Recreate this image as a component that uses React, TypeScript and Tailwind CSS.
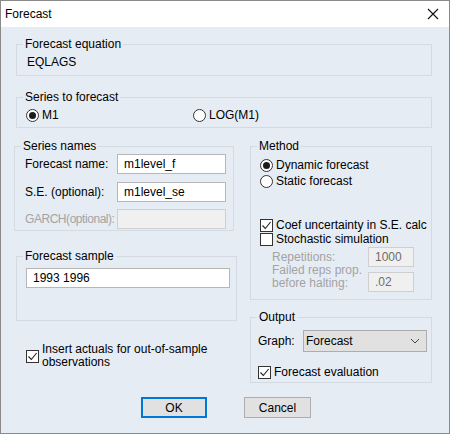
import type { ReactNode } from 'react'

// Classic Win32 "Forecast" dialog rebuilt with flow layout

const FONT = { fontFamily: '"Liberation Sans", Arial, sans-serif' }

function GroupBox({
  title,
  className,
  children,
}: {
  title: string
  className: string
  children: ReactNode
}) {
  return (
    <fieldset className={`border border-[#d3dae2] ${className}`}>
      <legend className="ml-[6px] px-[2px] leading-[14px]">{title}</legend>
      {children}
    </fieldset>
  )
}

function Radio({ checked, label }: { checked?: boolean; label: string }) {
  return (
    <div className="flex h-[14px] items-center">
      <span className="flex h-[13px] w-[13px] items-center justify-center rounded-full border border-[#333] bg-white">
        {checked && <span className="h-[7px] w-[7px] rounded-full bg-[#1b1b1b]" />}
      </span>
      <span className="ml-[3px] leading-[14px]">{label}</span>
    </div>
  )
}

function Check({ checked, label }: { checked?: boolean; label: ReactNode }) {
  return (
    <div className="flex items-center">
      <span className="flex h-[13px] w-[13px] shrink-0 items-center justify-center border border-[#333] bg-white">
        {checked && (
          <svg width="11" height="11" viewBox="0 0 11 11" fill="none">
            <path d="M1.5 5.5L4.3 8.5L9.6 2" stroke="#222" strokeWidth="1.1" />
          </svg>
        )}
      </span>
      <span className="ml-[3px]">{label}</span>
    </div>
  )
}

function TextField({ value, disabled }: { value?: string; disabled?: boolean }) {
  return (
    <div
      className={`flex h-[20px] items-center border px-[6px] ${
        disabled ? 'border-[#cfcfcf] bg-[#f0f0f0] text-[#6d6d6d]' : 'border-[#b7b7b7] bg-white'
      }`}
    >
      {value}
    </div>
  )
}

export default function App() {
  return (
    <div className="h-[435px] w-[452px] bg-white text-[12px] text-black" style={FONT}>
      <div className="flex h-[434px] w-[450px] flex-col border border-[#8a8a8a] bg-[#e6ecf4]">
        {/* title bar */}
        <div className="flex h-[26px] shrink-0 items-center justify-between bg-white pl-[4px] pr-[10px]">
          <span>Forecast</span>
          <svg width="12" height="12" viewBox="0 0 12 12">
            <path d="M1 1L11 11M11 1L1 11" stroke="#111" strokeWidth="1.1" />
          </svg>
        </div>

        <GroupBox title="Forecast equation" className="ml-[15px] mt-[10px] h-[39px] w-[416px]">
          <div className="mt-[4px] pl-[10px] leading-[14px]">EQLAGS</div>
        </GroupBox>

        <GroupBox title="Series to forecast" className="ml-[15px] mt-[14px] h-[38px] w-[416px]">
          <div className="mt-[4px] flex pl-[9px]">
            <div className="w-[167px]">
              <Radio checked label="M1" />
            </div>
            <Radio label="LOG(M1)" />
          </div>
        </GroupBox>

        <div className="mt-[11px] flex items-start">
          {/* left column */}
          <div className="ml-[13px] w-[223px]">
            <GroupBox title="Series names" className="h-[92px] w-[220px]">
              <div className="flex flex-col pl-[10px]">
                <div className="mt-[1px] flex items-center">
                  <span className="w-[92px]">Forecast name:</span>
                  <div className="w-[109px]">
                    <TextField value="m1level_f" />
                  </div>
                </div>
                <div className="mt-[8px] flex items-center">
                  <span className="w-[92px]">S.E. (optional):</span>
                  <div className="w-[109px]">
                    <TextField value="m1level_se" />
                  </div>
                </div>
                <div className="mt-[7px] flex items-center">
                  <span className="w-[92px] whitespace-nowrap tracking-[-0.45px] text-[#a3a3a3]">
                    GARCH(optional):
                  </span>
                  <div className="w-[109px]">
                    <TextField disabled />
                  </div>
                </div>
              </div>
            </GroupBox>

            <GroupBox title="Forecast sample" className="ml-[2px] mt-[18px] h-[72px] w-[221px]">
              <div className="ml-[9px] mt-[5px] w-[204px]">
                <TextField value="1993 1996" />
              </div>
            </GroupBox>

            <div className="ml-[12px] mt-[22px] leading-[13px]">
              <Check
                checked
                label={
                  <>
                    Insert actuals for out-of-sample
                    <br />
                    observations
                  </>
                }
              />
            </div>
          </div>

          {/* right column */}
          <div className="ml-[13px] w-[182px]">
            <GroupBox title="Method" className="h-[161px] w-[182px]">
              <div className="flex flex-col pl-[9px]">
                <div className="mt-[5px]">
                  <Radio checked label="Dynamic forecast" />
                </div>
                <div className="mt-[2px]">
                  <Radio label="Static forecast" />
                </div>
                <div className="mt-[28px] h-[14px]">
                  <Check checked label="Coef uncertainty in S.E. calc" />
                </div>
                <div className="h-[14px]">
                  <Check label="Stochastic simulation" />
                </div>
              </div>
              <div className="mt-[3px] flex pl-[21px]">
                <div className="w-[96px] leading-[13px] text-[#a3a3a3]">
                  <div className="mt-[4px]">Repetitions:</div>
                  <div>Failed reps prop.</div>
                  <div>before halting:</div>
                </div>
                <div className="flex w-[46px] flex-col gap-[5px]">
                  <TextField value="1000" disabled />
                  <TextField value=".02" disabled />
                </div>
              </div>
            </GroupBox>

            <GroupBox title="Output" className="mt-[10px] h-[73px] w-[182px]">
              <div className="mt-[6px] flex items-center pl-[7px]">
                <span className="w-[45px]">Graph:</span>
                <div className="flex h-[22px] w-[124px] items-center justify-between border border-[#adadad] bg-[#e1e1e1] pl-[2px] pr-[6px]">
                  <span>Forecast</span>
                  <svg width="10" height="6" viewBox="0 0 10 6">
                    <path d="M1 1L5 5L9 1" stroke="#444" strokeWidth="1" fill="none" />
                  </svg>
                </div>
              </div>
              <div className="mt-[11px] h-[14px] pl-[7px]">
                <Check checked label="Forecast evaluation" />
              </div>
            </GroupBox>
          </div>
        </div>

        <div className="ml-[140px] mt-[14px] flex gap-[37px]">
          <button className="flex h-[21px] w-[66px] items-center justify-center border-2 border-[#0078d7] bg-[#e1e1e1]">
            OK
          </button>
          <button className="flex h-[21px] w-[67px] items-center justify-center border border-[#adadad] bg-[#e1e1e1]">
            Cancel
          </button>
        </div>
      </div>
    </div>
  )
}
